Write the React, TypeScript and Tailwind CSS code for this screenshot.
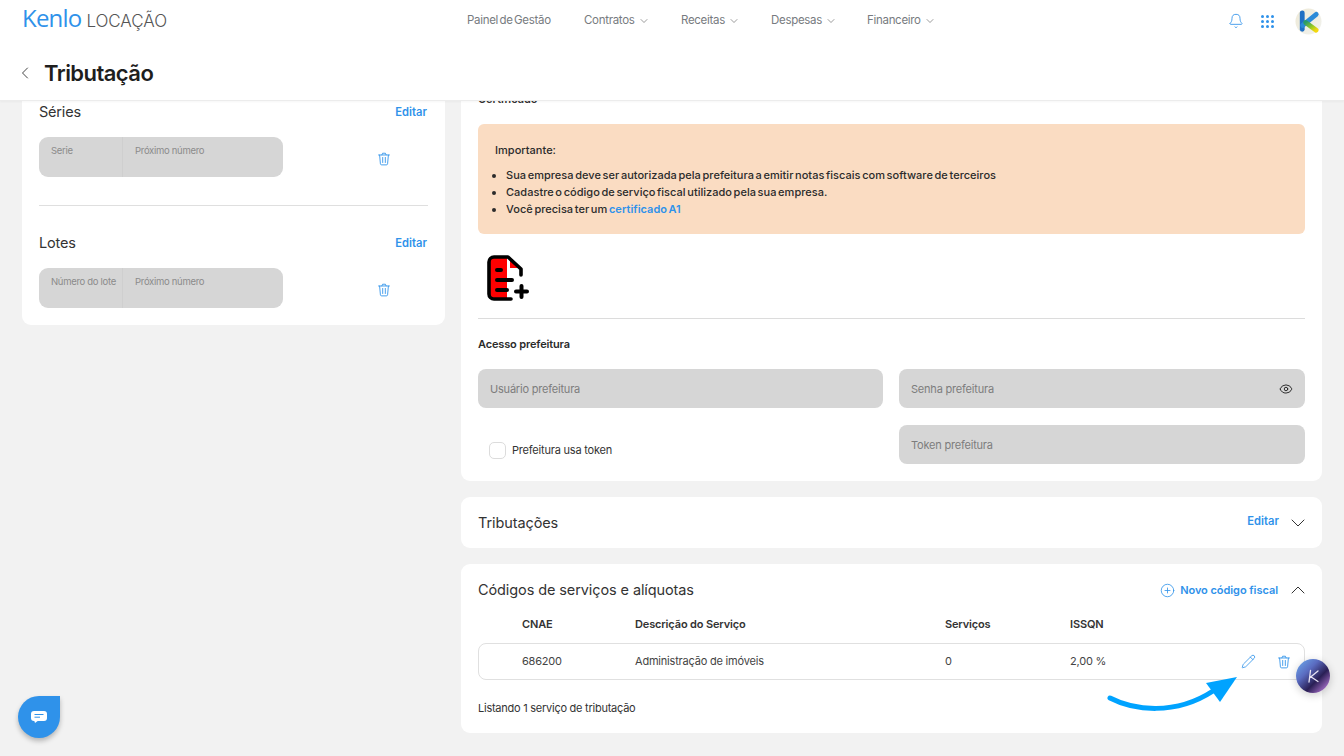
import React from "react";
import { ChevronDown, ChevronUp, ChevronLeft, Bell, Eye, CirclePlus, Pencil } from "lucide-react";

const F = "font-['Inter',sans-serif]";

function Trash({ className = "" }: { className?: string }) {
  return (
    <svg viewBox="0 0 16 16" className={className} fill="none" stroke="#2f92ea" strokeWidth="1" strokeLinecap="round" strokeLinejoin="round">
      <path d="M1.8 3.4h12.4" />
      <path d="M5.6 3.2 6.4 1.4h3.2l.8 1.8" />
      <path d="M3 3.6l.9 9.9c.1.8.6 1.2 1.3 1.2h5.6c.7 0 1.2-.4 1.3-1.2l.9-9.9" />
      <path d="M6.5 6.2v5.8M9.5 6.2v5.8" />
    </svg>
  );
}

function NavItem({ label, caret = true }: { label: string; caret?: boolean }) {
  return (
    <div className="flex items-center text-[11.5px] tracking-[-0.3px] [word-spacing:-1.5px] text-[#777b80]">
      <span>{label}</span>
      {caret && <ChevronDown className="ml-[3px] w-[12px] h-[12px] text-[#666]" strokeWidth={1.3} />}
    </div>
  );
}

function Header() {
  return (
    <header className="h-[101px] shrink-0 bg-white border-b border-[#ececec] shadow-[0_1px_2px_rgba(0,0,0,0.04)] flex flex-col relative z-10">
      <div className="h-[41px] pt-[1px] flex items-center pl-[22px] pr-[22px]">
        <div className="w-[445px] mb-[7px] flex items-baseline">
          <span className="font-['Open_Sans',sans-serif] text-[24px] leading-none tracking-[-0.8px] text-[#2f92ea]">Kenlo</span>
          <span className="ml-[5px] text-[17px] leading-none tracking-[-0.05px] font-light text-[#555]">LOCAÇÃO</span>
        </div>
        <div className="flex items-center">
          <div className="w-[117px]"><NavItem label="Painel de Gestão" caret={false} /></div>
          <div className="w-[97px]"><NavItem label="Contratos" /></div>
          <div className="w-[90px]"><NavItem label="Receitas" /></div>
          <div className="w-[96px]"><NavItem label="Despesas" /></div>
          <div><NavItem label="Financeiro" /></div>
        </div>
        <div className="ml-auto flex items-center">
          <Bell className="w-[16px] h-[16px] text-[#2f92ea]" strokeWidth={1.3} />
          <div className="ml-[17px] grid grid-cols-3 gap-[2px]">
            {Array.from({ length: 9 }).map((_, i) => (
              <span key={i} className="w-[3px] h-[3px] rounded-full bg-[#2f92ea]" />
            ))}
          </div>
          <svg viewBox="0 0 28 28" className="ml-[21px] w-[27px] h-[27px]">
            <defs>
              <linearGradient id="kbg" x1="0" y1="0" x2="1" y2="1">
                <stop offset="0" stopColor="#eee9d6" />
                <stop offset="1" stopColor="#f1f2ee" />
              </linearGradient>
              <linearGradient id="kleg" x1="0" y1="0" x2="1" y2="1">
                <stop offset="0" stopColor="#2a9a6a" />
                <stop offset="0.6" stopColor="#9ecb20" />
                <stop offset="1" stopColor="#f4d80f" />
              </linearGradient>
            </defs>
            <circle cx="14" cy="14" r="13.5" fill="url(#kbg)" />
            <path d="M7.5 5v17" stroke="#1f6fc4" strokeWidth="5" strokeLinecap="round" />
            <path d="M8 18 22 6.5" stroke="#2b8bd8" strokeWidth="5" strokeLinecap="round" />
            <path d="M11 15 22 23" stroke="url(#kleg)" strokeWidth="5" strokeLinecap="round" />
          </svg>
        </div>
      </div>
      <div className="flex-1 flex items-center pl-[15px] pt-[5px]">
        <ChevronLeft className="w-[20px] h-[20px] text-[#333]" strokeWidth={1.1} />
        <h1 className="ml-[9px] text-[22px] font-semibold tracking-[-0.55px] text-[#1e1e1e] leading-none">Tributação</h1>
      </div>
    </header>
  );
}

function GrayField({ a, b }: { a: string; b: string }) {
  return (
    <div className="w-[244px] h-[40px] rounded-[9px] bg-[#d6d6d6] flex text-[9.5px] tracking-[-0.3px] text-[#8b8b8b]">
      <div className="w-[84px] pl-[12px] pt-[7px] border-r border-[#cfcfcf]">{a}</div>
      <div className="pl-[12px] pt-[7px]">{b}</div>
    </div>
  );
}

function LeftSection({ title, a }: { title: string; a: string }) {
  return (
    <section>
      <div className="flex items-center justify-between pr-[1px] h-[22px]">
        <h2 className="text-[14.5px] tracking-[-0.2px] text-[#333]">{title}</h2>
        <span className="text-[11.2px] tracking-[0.05px] font-semibold text-[#2f92ea]">Editar</span>
      </div>
      <div className="flex items-center mt-[14px]">
        <GrayField a={a} b="Próximo número" />
        <Trash className="ml-[94px] w-[14px] h-[14px] mt-[3px]" />
      </div>
    </section>
  );
}

function Left() {
  return (
    <aside className="w-[423px] h-[224px] shrink-0 bg-white rounded-b-[9px] pl-[17px] pr-[17px] pt-0">
      <LeftSection title="Séries" a="Serie" />
      <div className="h-[1px] bg-[#dfdfdf] mt-[28px] mb-[26px]" />
      <LeftSection title="Lotes" a="Número do lote" />
    </aside>
  );
}

function Field({ label, eye = false }: { label: string; eye?: boolean }) {
  return (
    <div className="h-[39px] pt-[1px] rounded-[8px] bg-[#d6d6d6] flex items-center justify-between px-[12px] text-[11px] tracking-[-0.2px] text-[#7d7d7d]">
      <span>{label}</span>
      {eye && <Eye className="w-[14px] h-[14px] text-[#222]" strokeWidth={1.6} />}
    </div>
  );
}

function DocIcon() {
  return (
    <svg viewBox="0 0 44 50" className="w-[44px] h-[50px]">
      <path d="M3 8a5 5 0 0 1 5-5h14v13h12v28H8a5 5 0 0 1-5-5Z" fill="#ff0000" />
      <rect x="21" y="3" width="14" height="42" fill="#fff" />
      <path d="M24 6 33 14H24Z" fill="#ff0000" />
      <path d="M25 45H8a5 5 0 0 1-5-5V8a5 5 0 0 1 5-5h14l13 12v6" fill="none" stroke="#000" strokeWidth="3.6" strokeLinecap="round" strokeLinejoin="round" />
      <path d="M11 16h4M11 26h15M11 36h10" stroke="#000" strokeWidth="4" strokeLinecap="round" />
      <path d="M35.5 32v11M30 37.5h11" stroke="#000" strokeWidth="4" strokeLinecap="round" />
    </svg>
  );
}

function Right() {
  return (
    <div className="flex-1 min-w-0 flex flex-col gap-4">
      <section className="h-[380px] bg-white rounded-b-[9px] px-[17px] overflow-hidden relative">
        <div className="absolute left-[17px] -top-[9px] text-[11px] font-semibold text-[#333] leading-[14px]">Certificado</div>
        <div className="mt-[23px] h-[110px] rounded-[6px] bg-[#fadcc2] pl-[17px] pt-[18px] text-[11px] tracking-[0.02px] [word-spacing:-1.3px] font-medium text-[#2b2b2b]">
          <p className="leading-[17px]">Importante:</p>
          <ul className="mt-[8px] list-disc pl-[11px] leading-[17px]">
            <li>Sua empresa deve ser autorizada pela prefeitura a emitir notas fiscais com software de terceiros</li>
            <li>Cadastre o código de serviço fiscal utilizado pela sua empresa.</li>
            <li>Você precisa ter um <span className="text-[#2f92ea] font-semibold">certificado A1</span></li>
          </ul>
        </div>
        <div className="mt-[20px] ml-[8px] h-[64px]"><DocIcon /></div>
        <div className="h-[1px] bg-[#dcdcdc]" />
        <p className="mt-[18px] text-[11px] font-semibold tracking-[-0.15px] text-[#2b2b2b] leading-[14px]">Acesso prefeitura</p>
        <div className="mt-[18px] grid grid-cols-[405px_406px] gap-x-[16px]">
          <Field label="Usuário prefeitura" />
          <Field label="Senha prefeitura" eye />
          <div className="flex items-center mt-[17px] pl-[11px] h-[39px] pt-[11px]">
            <span className="w-[17px] h-[17px] rounded-[5px] border border-[#dcdcdc] bg-white" />
            <span className="ml-[6px] text-[11px] tracking-[-0.2px] text-[#333]">Prefeitura usa token</span>
          </div>
          <div className="mt-[17px]"><Field label="Token prefeitura" /></div>
        </div>
      </section>

      <section className="h-[51px] bg-white rounded-[9px] pl-[17px] pr-[17px] flex items-center justify-between">
        <h2 className="text-[14.5px] tracking-[-0.1px] text-[#333]">Tributações</h2>
        <div className="flex items-center">
          <span className="text-[11.2px] tracking-[0.05px] font-semibold text-[#2f92ea] -mt-[2px]">Editar</span>
          <ChevronDown className="ml-[7px] -mr-[5px] w-[24px] h-[24px] text-[#333]" strokeWidth={1} />
        </div>
      </section>

      <section className="h-[169px] bg-white rounded-[9px] px-[17px]">
        <div className="h-[52px] flex items-center justify-between">
          <h2 className="text-[14.5px] tracking-[-0.1px] text-[#333]">Códigos de serviços e alíquotas</h2>
          <div className="flex items-center">
            <CirclePlus className="w-[15px] h-[15px] text-[#2f92ea]" strokeWidth={1.3} />
            <span className="ml-[5px] text-[11px] font-semibold tracking-[-0.05px] text-[#2f92ea]">Novo código fiscal</span>
            <ChevronUp className="ml-[8px] -mr-[5px] w-[24px] h-[24px] text-[#333]" strokeWidth={1} />
          </div>
        </div>
        <div className="grid grid-cols-[113px_310px_125px_1fr] pl-[44px] text-[11px] font-semibold tracking-[-0.15px] text-[#333] h-[16px] items-center">
          <span>CNAE</span><span>Descrição do Serviço</span><span>Serviços</span><span>ISSQN</span>
        </div>
        <div className="mt-[11px] h-[37px] rounded-[8px] border border-[#e0e0e0] grid grid-cols-[113px_310px_125px_171px_1fr] pl-[43px] items-center text-[11px] tracking-[-0.2px] text-[#444]">
          <span>686200</span><span>Administração de imóveis</span><span>0</span><span>2,00 %</span>
          <div className="flex items-center gap-[21px]">
            <Pencil className="w-[15px] h-[15px] text-[#2f92ea]" strokeWidth={1.3} />
            <Trash className="w-[14px] h-[14px]" />
          </div>
        </div>
        <p className="mt-[21px] text-[11px] tracking-[-0.25px] text-[#333] leading-[14px]">Listando 1 serviço de tributação</p>
      </section>
    </div>
  );
}

export default function App() {
  return (
    <div className={`${F} relative h-[756px] w-[1344px] overflow-hidden bg-[#f2f2f2] flex flex-col`}>
      <Header />
      <main className="flex gap-4 pl-[22px] pr-[22px]">
        <Left />
        <Right />
      </main>

      <div className="absolute left-[18px] top-[696px] w-[42px] h-[42px] bg-[#2f92ea] rounded-full rounded-tr-[6px] shadow-[0_3px_5px_rgba(0,0,0,0.25)] flex items-center justify-center">
        <svg viewBox="0 0 16 12" className="w-[16px] h-[12px]">
          <rect x="0" y="0" width="16" height="10" rx="3" fill="#fff" />
          <path d="M3 9h5l-4 3Z" fill="#fff" />
          <path d="M3.5 3.5h9M3.5 6.2h5.5" stroke="#2f92ea" strokeWidth="1" />
        </svg>
      </div>

      <div className="absolute left-[1296px] top-[659px] w-[34px] h-[34px] rounded-full bg-[linear-gradient(135deg,#6fb0f0_0%,#5a6bc0_35%,#2a1f55_62%,#d88ff5_100%)] shadow-[0_2px_8px_rgba(0,0,0,0.2)] flex items-center justify-center">
        <svg viewBox="0 0 16 16" className="w-[16px] h-[16px]" fill="none" stroke="#e8e4f4" strokeWidth="1.3" strokeLinecap="round" strokeLinejoin="round">
          <path d="M4 14 5.5 2.5 M5 9.5 13 3 M5.5 8.5 13 13.5" />
        </svg>
      </div>

      <svg viewBox="0 0 135 50" className="absolute left-[1105px] top-[672px] w-[135px] h-[50px]">
        <path d="M5 26C28 38 70 44 108 19" fill="none" stroke="#00a3ff" strokeWidth="5" strokeLinecap="round" />
        <path d="M132 5 101 11 115 30Z" fill="#00a3ff" />
      </svg>
    </div>
  );
}
